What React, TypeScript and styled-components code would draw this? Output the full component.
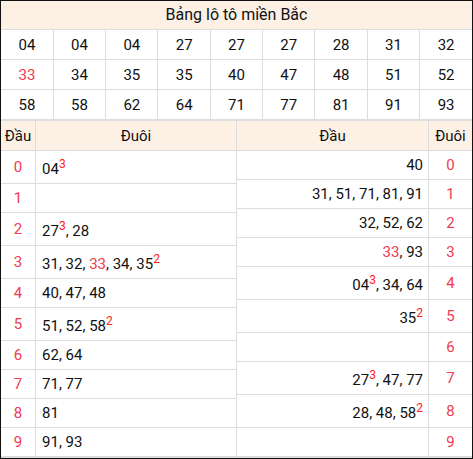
import React from 'react'
import styled, { createGlobalStyle } from 'styled-components'

const GlobalStyle = createGlobalStyle`
  body {
    margin: 0;
    font-family: Roboto, "Liberation Sans", sans-serif;
    color: #111;
  }
`

type Num = { n: string; hot?: boolean; times?: number }

const loto: Num[][] = [
  [{ n: '04' }, { n: '04' }, { n: '04' }, { n: '27' }, { n: '27' }, { n: '27' }, { n: '28' }, { n: '31' }, { n: '32' }],
  [{ n: '33', hot: true }, { n: '34' }, { n: '35' }, { n: '35' }, { n: '40' }, { n: '47' }, { n: '48' }, { n: '51' }, { n: '52' }],
  [{ n: '58' }, { n: '58' }, { n: '62' }, { n: '64' }, { n: '71' }, { n: '77' }, { n: '81' }, { n: '91' }, { n: '93' }],
]

const dau: Num[][] = [
  [{ n: '04', times: 3 }],
  [],
  [{ n: '27', times: 3 }, { n: '28' }],
  [{ n: '31' }, { n: '32' }, { n: '33', hot: true }, { n: '34' }, { n: '35', times: 2 }],
  [{ n: '40' }, { n: '47' }, { n: '48' }],
  [{ n: '51' }, { n: '52' }, { n: '58', times: 2 }],
  [{ n: '62' }, { n: '64' }],
  [{ n: '71' }, { n: '77' }],
  [{ n: '81' }],
  [{ n: '91' }, { n: '93' }],
]

const duoi: Num[][] = [
  [{ n: '40' }],
  [{ n: '31' }, { n: '51' }, { n: '71' }, { n: '81' }, { n: '91' }],
  [{ n: '32' }, { n: '52' }, { n: '62' }],
  [{ n: '33', hot: true }, { n: '93' }],
  [{ n: '04', times: 3 }, { n: '34' }, { n: '64' }],
  [{ n: '35', times: 2 }],
  [],
  [{ n: '27', times: 3 }, { n: '47' }, { n: '77' }],
  [{ n: '28' }, { n: '48' }, { n: '58', times: 2 }],
  [],
]

function NumList({ items }: { items: Num[] }) {
  return (
    <>
      {items.map((it, i) => (
        <React.Fragment key={i}>
          {i > 0 && ', '}
          <Value $hot={it.hot}>{it.n}</Value>
          {it.times && <Times>{it.times}</Times>}
        </React.Fragment>
      ))}
    </>
  )
}

export default function App() {
  return (
    <>
      <GlobalStyle />
      <Frame>
        <LotoTable>
          <tbody>
            <tr>
              <Title colSpan={9}>Bảng lô tô miền Bắc</Title>
            </tr>
            {loto.map((row, r) => (
              <tr key={r}>
                {row.map((it, c) => (
                  <LotoCell key={c}>
                    <Value $hot={it.hot}>{it.n}</Value>
                  </LotoCell>
                ))}
              </tr>
            ))}
          </tbody>
        </LotoTable>
        <Lower>
          <HalfTable>
            <thead>
              <tr>
                <HeadCell $w={34}>Đầu</HeadCell>
                <HeadCell>Đuôi</HeadCell>
              </tr>
            </thead>
            <tbody>
              {dau.map((items, d) => (
                <tr key={d}>
                  <DigitCell>{d}</DigitCell>
                  <ListCell $align="left">
                    <NumList items={items} />
                  </ListCell>
                </tr>
              ))}
            </tbody>
          </HalfTable>
          <Divider />
          <HalfTable>
            <thead>
              <tr>
                <HeadCell>Đầu</HeadCell>
                <HeadCell $w={43}>Đuôi</HeadCell>
              </tr>
            </thead>
            <tbody>
              {duoi.map((items, d) => (
                <tr key={d}>
                  <ListCell $align="right">
                    <NumList items={items} />
                  </ListCell>
                  <DigitCell>{d}</DigitCell>
                </tr>
              ))}
            </tbody>
          </HalfTable>
        </Lower>
      </Frame>
    </>
  )
}

const Frame = styled.div`
  width: 473px;
  height: 459px;
  box-sizing: border-box;
  border: 1px solid #111;
  background: #fff;
  overflow: hidden;
  font-size: 15px;
`

const LotoTable = styled.table`
  width: 100%;
  border-collapse: collapse;
  border-style: hidden;
  table-layout: fixed;

  td {
    border: 1px solid #ddd;
  }
  tr:nth-child(2) td:first-child {
    width: 47px;
  }
`

const Title = styled.td`
  background: #fdf1e6;
  text-align: center;
  font-size: 16px;
  line-height: 18px;
  padding: 5px 0 5px;
`

const LotoCell = styled.td`
  text-align: center;
  line-height: 18px;
  padding: 6px 0 5px;
`

const Value = styled.span<{ $hot?: boolean }>`
  color: ${(p) => (p.$hot ? '#ef3b4f' : 'inherit')};
`

const Times = styled.sup`
  color: #ff1a1a;
  font-size: 12px;
  line-height: 17px;
`

const Lower = styled.div`
  display: flex;
  border-top: 2px solid #ddd;
  border-bottom: 2px solid #ddd;
`

const Divider = styled.div`
  width: 1px;
  flex: none;
  background: #ddd;
`

const HalfTable = styled.table`
  flex: 1;
  border-collapse: collapse;
  border-style: hidden;

  td,
  th {
    border: 1px solid #ddd;
  }
`

const HeadCell = styled.th<{ $w?: number }>`
  width: ${(p) => (p.$w ? `${p.$w}px` : 'auto')};
  background: #fdf1e6;
  font-weight: 400;
  line-height: 18px;
  padding: 6px 0 5px;
  text-align: center;
`

const DigitCell = styled.td`
  color: #ef3b4f;
  text-align: center;
  line-height: 18px;
  padding: 5px 0;
`

const ListCell = styled.td<{ $align: 'left' | 'right' }>`
  text-align: ${(p) => p.$align};
  line-height: 18px;
  padding: 5px 5px 5px 6px;
  white-space: nowrap;
`
